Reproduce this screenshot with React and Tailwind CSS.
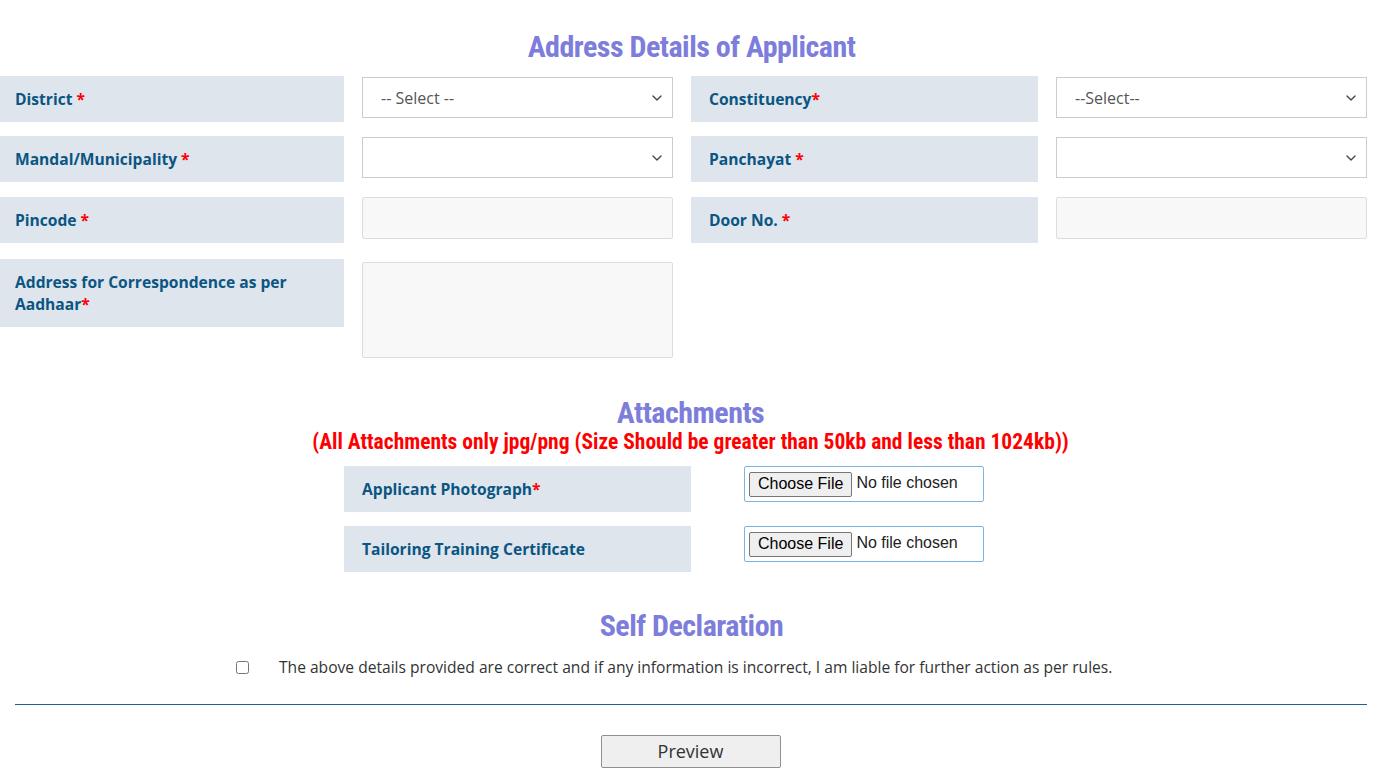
import { ChevronDown } from "lucide-react";

const heading = "font-['Roboto',sans-serif] font-bold text-[#7d7ddb] [font-stretch:condensed] tracking-[-0.5px]";

function Label({ text, star = " *", tall, pad = "px-[15px]" }) {
  return (
    <div
      className={`bg-[#dee5ec] ${pad} text-[15.6px] font-bold text-[#0b5583] leading-[22px] ${
        tall ? "h-[68px] pt-[12px]" : "h-[46px] flex items-center"
      }`}
    >
      <span>
        {text}
        <span className="text-[#ff0000]">{star}</span>
      </span>
    </div>
  );
}

function Select({ value }) {
  return (
    <div className="mt-[1px] h-[41px] border border-[#cccccc] bg-white flex items-center justify-between pl-[18px] pr-[7px] text-[16px] text-[#555555]">
      <span>{value}</span>
      <ChevronDown size={16} strokeWidth={2} className="text-[#444]" />
    </div>
  );
}

function TextBox({ h = "h-[42px]" }) {
  return <div className={`${h} border border-[#dddddd] rounded-[2px] bg-[#f8f8f8]`}></div>;
}

function FileInput() {
  return (
    <div className="w-[240px] h-[36px] border border-[#7ab6e3] rounded-[2px] bg-white flex items-center pl-[4px] gap-[4px] font-['Liberation_Sans',Arial,sans-serif] text-[16px] text-[#222]">
      <div className="h-[25px] px-[8px] flex items-center bg-[#efefef] border border-[#767676] rounded-[2px] text-black">
        Choose File
      </div>
      <span className="-mt-[2px]">No file chosen</span>
    </div>
  );
}

export default function App() {
  return (
    <div className="min-h-screen bg-white font-['Open_Sans',sans-serif] pt-[30px]">
      <h2 className={`${heading} text-center text-[30px] leading-[34px] pr-[6px]`}>Address Details of Applicant</h2>

      <div className="mt-[12px] pr-[22px] grid grid-cols-[344px_311px_347px_311px] gap-x-[18px] gap-y-[14px] items-start">
        <Label text="District" />
        <Select value="-- Select --" />
        <Label text="Constituency" star="*" pad="px-[18px]" />
        <Select value="--Select--" />

        <Label text="Mandal/Municipality" />
        <Select value="" />
        <Label text="Panchayat" pad="px-[18px]" />
        <Select value="" />

        <div className="mt-[1px]">
          <Label text="Pincode" />
        </div>
        <div className="mt-[1px]">
          <TextBox />
        </div>
        <div className="mt-[1px]">
          <Label text="Door No." pad="px-[18px]" />
        </div>
        <div className="mt-[1px]">
          <TextBox />
        </div>

        <div className="mt-[2px]">
          <Label text={<>Address for Correspondence as per<br />Aadhaar</>} star="*" tall />
        </div>
        <div className="mt-[5px]">
          <TextBox h="h-[96px]" />
        </div>
      </div>

      <div className="pr-[8px]">
        <h2 className={`${heading} text-center text-[30px] leading-[34px] mt-[38px]`}>Attachments</h2>
        <p className="font-['Roboto',sans-serif] font-bold text-[#ff0000] [font-stretch:condensed] text-center text-[21.5px] leading-[24px]">
          (All Attachments only jpg/png (Size Should be greater than 50kb and less than 1024kb))
        </p>
      </div>

      <div className="mt-[12px] ml-[344px] flex flex-col gap-[14px]">
        <div className="flex items-start gap-[53px]">
          <div className="w-[347px]">
            <Label text="Applicant Photograph" star="*" pad="px-[18px]" />
          </div>
          <FileInput />
        </div>
        <div className="flex items-start gap-[53px]">
          <div className="w-[347px]">
            <Label text="Tailoring Training Certificate" star="" pad="px-[18px]" />
          </div>
          <FileInput />
        </div>
      </div>

      <h2 className={`${heading} text-center text-[30px] leading-[34px] mt-[37px] pr-[6px]`}>Self Declaration</h2>

      <div className="mt-[12px] flex items-center pl-[236px]">
        <input type="checkbox" className="w-[13px] h-[13px] m-0" />
        <span className="ml-[30px] text-[15.6px] leading-[24px] text-[#333333]">
          The above details provided are correct and if any information is incorrect, I am liable for further action as per rules.
        </span>
      </div>

      <div className="ml-[15px] mr-[22px] mt-[25px] h-px bg-[#1f5f94]"></div>

      <div className="mt-[30px] flex justify-center pr-[8px]">
        <button className="w-[180px] h-[33px] bg-[#efefef] border border-[#8f8f8f] rounded-[2px] text-[18px] text-[#333]">
          Preview
        </button>
      </div>
    </div>
  );
}
